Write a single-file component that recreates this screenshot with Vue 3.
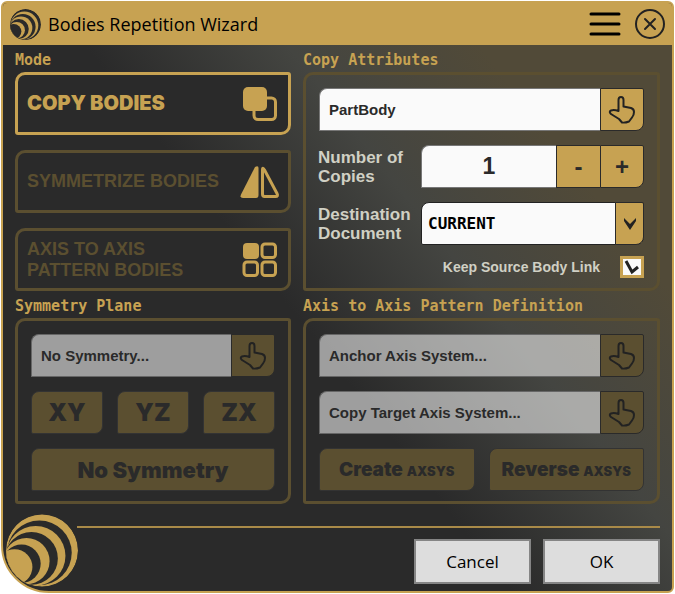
<template>
  <main class="window">
    <header class="titlebar">
      <svg class="titlebar-logo" viewBox="0 0 218 218" aria-hidden="true">
        <g v-for="(ring, i) in rings" :key="i">
          <circle :cx="ring.x" :cy="ring.y" :r="ring.r" :class="i % 2 ? 'ring-light' : 'ring-dark'" />
        </g>
      </svg>
      <h1>Bodies Repetition Wizard</h1>
      <button class="icon-btn menu" aria-label="Menu">
        <svg viewBox="0 0 32 32"><path d="M2 6H30M2 16H30M2 26H30" /></svg>
      </button>
      <button class="icon-btn close" aria-label="Close">
        <svg viewBox="0 0 32 32">
          <circle cx="16" cy="16" r="14" />
          <path d="M11 11L21 21M21 11L11 21" />
        </svg>
      </button>
    </header>

    <div class="content">
      <section>
        <h2>Mode</h2>
        <div class="modes">
          <button
            v-for="m in modes"
            :key="m.id"
            class="mode"
            :class="{ active: mode === m.id }"
            @click="mode = m.id"
          >
            <span>{{ m.label }}</span>
            <svg v-if="m.id === 'copy'" viewBox="0 0 40 40">
              <rect x="14" y="14" width="21.500" height="21.500" rx="4" />
              <rect class="solid" x="3" y="3" width="24" height="24" rx="5" />
            </svg>
            <svg v-else-if="m.id === 'symmetry'" viewBox="0 0 40 40">
              <path class="solid" d="M15 5Q18.500 3 18.500 6V33Q18.500 36 16 36H3Q-0.500 36 1 32.500Z" />
              <path d="M22.500 8Q22.500 4.500 24.500 8L37 31.500Q38.500 34.500 35.500 34.500H24.500Q22.500 34.500 22.500 32Z" />
            </svg>
            <svg v-else viewBox="0 0 40 40">
              <rect class="solid" x="3" y="3" width="16" height="16" rx="4" />
              <rect x="22" y="4" width="13.500" height="13.500" rx="3" />
              <rect x="4" y="22" width="13.500" height="13.500" rx="3" />
              <rect x="22" y="22" width="13.500" height="13.500" rx="3" />
            </svg>
          </button>
        </div>
      </section>

      <section>
        <h2>Copy Attributes</h2>
        <div class="panel">
          <div class="field">
            <input v-model="source" class="text" type="text" aria-label="Source body" />
            <button class="pick" aria-label="Pick source body">
              <svg viewBox="0 0 28 30"><path :d="hand" /></svg>
            </button>
          </div>
          <div class="row">
            <label for="copies">Number of Copies</label>
            <div class="field">
              <input id="copies" v-model="copies" class="text count" type="text" />
              <button class="pick step" @click="copies = Math.max(1, +copies - 1)">-</button>
              <button class="pick step" @click="copies = +copies + 1">+</button>
            </div>
          </div>
          <div class="row">
            <label for="destination">Destination Document</label>
            <div class="combo">
              <select id="destination" v-model="destination">
                <option>CURRENT</option>
                <option>NEW</option>
              </select>
              <span class="arrow">
                <svg viewBox="0 0 14 14"><path d="M1 1L7 7L13 1V4L7 13L1 4Z" /></svg>
              </span>
            </div>
          </div>
          <label class="check">
            Keep Source Body Link
            <input v-model="keepLink" type="checkbox" />
            <svg v-if="keepLink" viewBox="0 0 24 22"><path d="M6 5L12 16L18 11" /></svg>
          </label>
        </div>
      </section>

      <section>
        <h2>Symmetry Plane</h2>
        <div class="panel muted">
          <div class="field">
            <input class="text" type="text" value="No Symmetry..." aria-label="Symmetry plane" />
            <button class="pick" aria-label="Pick symmetry plane">
              <svg viewBox="0 0 28 30"><path :d="hand" /></svg>
            </button>
          </div>
          <div class="buttons">
            <button v-for="p in ['XY', 'YZ', 'ZX']" :key="p" class="action plane">{{ p }}</button>
          </div>
          <button class="action none">No Symmetry</button>
        </div>
      </section>

      <section>
        <h2>Axis to Axis Pattern Definition</h2>
        <div class="panel muted">
          <div v-for="name in ['Anchor Axis System...', 'Copy Target Axis System...']" :key="name" class="field">
            <input class="text" type="text" :value="name" :aria-label="name" />
            <button class="pick" :aria-label="'Pick ' + name">
              <svg viewBox="0 0 28 30"><path :d="hand" /></svg>
            </button>
          </div>
          <div class="buttons">
            <button class="action">Create <small>AXSYS</small></button>
            <button class="action">Reverse <small>AXSYS</small></button>
          </div>
        </div>
      </section>
    </div>

    <footer>
      <svg class="footer-logo" viewBox="0 0 218 218" aria-hidden="true">
        <g v-for="(ring, i) in rings" :key="i">
          <circle :cx="ring.x" :cy="ring.y" :r="ring.r" :class="i % 2 ? 'ring-dark' : 'ring-light'" />
        </g>
      </svg>
      <div class="footer-main">
        <hr />
        <div class="dialog-buttons">
          <button>Cancel</button>
          <button>OK</button>
        </div>
      </div>
    </footer>
  </main>
</template>

<script setup>
import { ref } from 'vue'

const modes = [
  { id: 'copy', label: 'COPY BODIES' },
  { id: 'symmetry', label: 'SYMMETRIZE BODIES' },
  { id: 'pattern', label: 'AXIS TO AXIS\nPATTERN BODIES' }
]

// nested circles of the shell logo, alternating colours
const rings = [
  { x: 109, y: 109, r: 109 },
  { x: 101, y: 116, r: 98 },
  { x: 90, y: 125, r: 90 },
  { x: 77, y: 133, r: 80 },
  { x: 62, y: 141, r: 70 },
  { x: 47, y: 149, r: 58 },
  { x: 26, y: 159, r: 54 }
]

const hand =
  'M10.500 16V5Q10.500 2 13 2Q15.500 2 15.500 5V11.500L23 13Q26 14 26 17Q26 20 24 22.500L21 26.500Q17 28 14 27.500L11 24L3 19Q0.500 16.500 3 15.500Q6 14.500 10.500 16Z'

const mode = ref('copy')
const source = ref('PartBody')
const copies = ref(1)
const destination = ref('CURRENT')
const keepLink = ref(true)
</script>

<style>
body {
  margin: 0;
  background: #fff;
}
</style>

<style scoped>
* {
  box-sizing: border-box;
}

.window {
  --gold: #c7a252;
  --dim: #5b4f30;
  --dark: #2a2a2a;
  margin: 1px;
  border: 2px solid var(--gold);
  border-radius: 6px 6px 6px 48px;
  overflow: hidden;
  background: linear-gradient(52deg, #2a2a2a 45%, #444541 63%, #514a38 80%);
  font-family: "Liberation Sans", Arial, sans-serif;
  color: var(--dark);
}

button,
input,
select {
  margin: 0;
  font-family: inherit;
  color: inherit;
}

button {
  padding: 0;
  cursor: pointer;
}

svg {
  display: block;
  flex: none;
}

.titlebar {
  display: flex;
  align-items: center;
  height: 42px;
  padding: 0 6px 0 7px;
  background: var(--gold);
}

.titlebar-logo {
  width: 31px;
  height: 31px;
  border-radius: 50%;
}

.ring-light {
  fill: var(--gold);
}

.ring-dark {
  fill: var(--dark);
}

h1 {
  flex: 1;
  margin: 0 0 0 7px;
  font: 400 18px "Open Sans", "Noto Sans", sans-serif;
  color: #000;
}

.icon-btn {
  border: 0;
  background: none;
}

.icon-btn svg {
  width: 32px;
  height: 32px;
  fill: none;
  stroke: #000;
  stroke-width: 3;
  stroke-linecap: round;
}

.close {
  margin-left: 13px;
}

.close svg {
  stroke: #222;
  stroke-width: 2;
}

.content {
  display: grid;
  grid-template-columns: 276fr 357fr;
  column-gap: 12px;
  padding: 0 12px;
}

section {
  display: flex;
  flex-direction: column;
  min-width: 0;
}

h2 {
  margin: 0;
  height: 27px;
  font: 700 15px/30px "DejaVu Sans Mono", monospace;
  white-space: nowrap;
  color: var(--gold);
}

.modes {
  display: grid;
  gap: 15px;
}

.mode {
  display: flex;
  align-items: center;
  justify-content: space-between;
  height: 63px;
  padding: 0 8px 0 9px;
  border: 3px solid var(--dim);
  border-radius: 10px 3px 10px 3px;
  background: var(--dark);
  font-size: 18px;
  font-weight: 700;
  line-height: 21px;
  text-align: left;
  white-space: pre-line;
  color: var(--dim);
}

.mode.active {
  border-color: var(--gold);
  font-family: Inter, sans-serif;
  font-size: 20px;
  font-weight: 900;
  color: var(--gold);
}

.mode svg {
  width: 40px;
  height: 40px;
  fill: none;
  stroke: var(--gold);
  stroke-width: 3;
}

.mode .solid {
  fill: var(--gold);
  stroke: none;
}

.panel {
  flex: 1;
  display: flex;
  flex-direction: column;
  gap: 14px;
  padding: 13px 13px 10px;
  border: 3px solid var(--dim);
  border-radius: 10px 3px 10px 3px;
}

.field {
  display: flex;
  height: 43px;
}

.text {
  flex: 1;
  width: 0;
  min-width: 0;
  padding: 0 9px;
  border: 1px solid #777;
  border-right: 0;
  border-radius: 8px 0 0 0;
  background: #fafafa;
  font-size: 15px;
  font-weight: 700;
}

.count {
  font-size: 23px;
  text-align: center;
}

.pick {
  display: flex;
  flex: none;
  align-items: center;
  justify-content: center;
  width: 44px;
  border: 1px solid var(--dark);
  border-radius: 0 2px 8px 0;
  background: var(--gold);
}

.pick svg {
  width: 28px;
  height: 30px;
  fill: none;
  stroke: #222;
  stroke-width: 2;
  stroke-linejoin: round;
}

.step {
  font-size: 24px;
  font-weight: 700;
}

.step:not(:last-child) {
  border-right: 0;
  border-radius: 0;
}

.row {
  display: grid;
  grid-template-columns: 102px minmax(0, 1fr);
  align-items: center;
}

.row label {
  margin-left: -1px;
  font-size: 17px;
  font-weight: 700;
  line-height: 19px;
  color: #d0d0c4;
}

.combo {
  display: grid;
  height: 43px;
}

.combo select {
  grid-area: 1 / 1;
  appearance: none;
  padding: 0 6px;
  border: 1px solid #222;
  border-radius: 8px 2px 8px 2px;
  background: #fafafa;
  font: 700 16px "DejaVu Sans Mono", monospace;
  color: #000;
}

.arrow {
  grid-area: 1 / 1;
  justify-self: end;
  display: grid;
  place-items: center;
  width: 29px;
  border: 1px solid var(--dark);
  border-radius: 0 2px 8px 0;
  background: var(--gold);
  pointer-events: none;
}

.arrow svg {
  width: 14px;
  height: 14px;
  fill: #222;
}

.check {
  display: grid;
  grid-template-columns: auto 24px;
  justify-content: end;
  align-items: center;
  column-gap: 20px;
  height: 22px;
  margin-top: -3px;
  font-size: 14px;
  font-weight: 700;
  color: #d0d0c4;
}

.check input {
  grid-area: 1 / 2;
  appearance: none;
  width: 24px;
  height: 22px;
  border: 3px solid var(--gold);
  background: #fafafa;
}

.check svg {
  grid-area: 1 / 2;
  z-index: 1;
  width: 24px;
  height: 22px;
  fill: none;
  stroke: #222;
  stroke-width: 3;
  pointer-events: none;
}

.muted .text {
  border-color: #666;
  background: rgba(250, 250, 250, 0.56);
}

.muted .pick,
.action {
  background: var(--dim);
}

.buttons {
  display: flex;
  gap: 14px;
}

.action {
  flex: 1;
  height: 43px;
  border: 1px solid #333;
  border-radius: 8px 2px 8px 2px;
  font-family: Inter, sans-serif;
  font-size: 19px;
  font-weight: 900;
  white-space: nowrap;
}

.action small {
  font-size: 13px;
}

.action.plane {
  font-size: 24px;
}

.action.none {
  flex: none;
  font-size: 22px;
}

footer {
  display: flex;
  align-items: flex-end;
  padding: 10px 12px 0 3px;
}

.footer-logo {
  width: 72px;
  height: 73px;
  margin-bottom: 4px;
  border-radius: 50%;
}

.footer-main {
  flex: 1;
  padding-bottom: 7px;
}

hr {
  height: 2px;
  margin: 0 0 11px -1px;
  border: 0;
  background: #a98a48;
}

.dialog-buttons {
  display: flex;
  justify-content: flex-end;
  gap: 12px;
}

.dialog-buttons button {
  width: 117px;
  height: 45px;
  border: 2px solid #858585;
  background: #ddd;
  font: 400 17px "Open Sans", "Noto Sans", sans-serif;
  color: #000;
}
</style>
